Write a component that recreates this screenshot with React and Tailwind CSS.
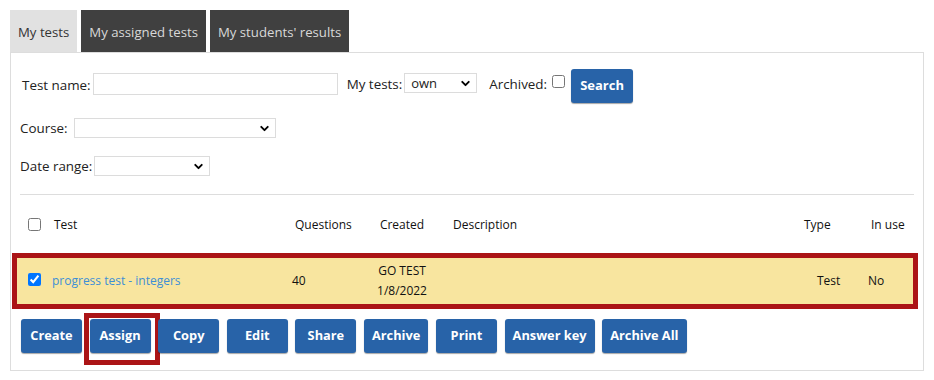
import React from "react";
import { ChevronDown } from "lucide-react";

const font = "font-['Open_Sans',sans-serif]";

function Select({ value, width }) {
  return (
    <div
      className={`relative flex h-[20px] items-center border border-[#dcdcdc] bg-white ${width}`}
    >
      <span className="pl-[6px] text-[13px] leading-none text-[#222]">{value}</span>
      <ChevronDown
        className="absolute right-[4px] top-[3px] h-[13px] w-[13px] text-black"
        strokeWidth={3.5}
      />
    </div>
  );
}

function Button({ children, outlined }) {
  return (
    <div className="relative">
      <button className="h-[34px] min-w-[61px] rounded-[3px] bg-[#2863a8] px-[8px] text-[12.8px] font-bold text-white shadow-[0_1px_1px_rgba(0,0,0,0.35)]">
        {children}
      </button>
      {outlined && (
        <span className="pointer-events-none absolute -left-[6px] -right-[9px] -top-[6px] -bottom-[12px] border-[5px] border-[#ab1416]" />
      )}
    </div>
  );
}

export default function App() {
  const buttons = ["Create", "Assign", "Copy", "Edit", "Share", "Archive", "Print", "Answer key", "Archive All"];

  return (
    <div className={`${font} min-h-[380px] w-[934px] bg-white pl-[10px] pt-[10px] text-[#222]`}>
      {/* Tabs */}
      <div className="flex gap-[4px] text-[13.2px]">
        <div className="flex h-[42px] items-center bg-[#e1e1e1] px-[8px] pt-[3px] text-[#333]">My tests</div>
        <div className="flex h-[42px] items-center bg-[#404040] px-[8px] pt-[3px] text-[#d8d8d8]">My assigned tests</div>
        <div className="flex h-[42px] items-center bg-[#404040] px-[8px] pt-[3px] text-[#d8d8d8]">My students' results</div>
      </div>

      {/* Panel */}
      <div className="w-[914px] border border-[#dddddd] px-[9px] pb-[17px] pt-[16px]">
        {/* Filters */}
        <div className="flex items-start text-[13.4px]">
          <span className="ml-[2px] mt-[5px] leading-[22px]">Test name:</span>
          <div className="ml-[2px] mt-[4px] h-[22px] w-[245px] border border-[#dcdcdc]" />
          <span className="ml-[9px] mt-[4px] leading-[22px]">My tests:</span>
          <div className="ml-[2px] mt-[4px]">
            <Select value="own" width="w-[73px]" />
          </div>
          <span className="ml-[12px] mt-[4px] leading-[22px]">Archived:</span>
          <input type="checkbox" className="ml-[5px] mt-[6px] h-[13px] w-[13px]" />
          <button className="ml-[6px] h-[34px] w-[62px] rounded-[3px] bg-[#2863a8] text-[13px] font-bold text-white shadow-[0_1px_1px_rgba(0,0,0,0.35)]">
            Search
          </button>
        </div>

        <div className="mt-[15px] flex items-center text-[13.4px]">
          <span className="mr-[6px] leading-[20px]">Course:</span>
          <Select value="" width="w-[202px]" />
        </div>

        <div className="mt-[18px] flex items-center text-[13.4px]">
          <span className="mr-[2px] leading-[20px]">Date range:</span>
          <Select value="" width="w-[116px]" />
        </div>

        <div className="mt-[18px] border-t border-[#dddddd]" />

        {/* Table header */}
        <div className="flex h-[58px] items-center pt-[2px] text-[12px] text-[#111]">
          <div className="w-[30px] pl-[8px]">
            <input type="checkbox" className="mt-[3px] h-[13px] w-[13px]" />
          </div>
          <div className="w-[238px] pl-[4px]">Test</div>
          <div className="w-[78px] pl-[7px]">Questions</div>
          <div className="w-[72px] text-center">Created</div>
          <div className="w-[352px] pl-[15px]">Description</div>
          <div className="w-[65px] pl-[14px]">Type</div>
          <div className="w-[56px] pl-[16px]">In use</div>
        </div>

        {/* Selected row */}
        <div className="-ml-[8px] -mr-[4px] flex items-center border-[5px] border-[#ab1416] bg-[#f8e59f] py-[3px] pl-[3px] text-[12px] text-[#111]">
          <div className="w-[30px] pl-[8px]">
            <input type="checkbox" defaultChecked className="mt-[1px] h-[13px] w-[13px]" />
          </div>
          <div className="w-[238px] pl-[2px] text-[#3d8fd6]">progress test - integers</div>
          <div className="w-[78px] pl-[4px]">40</div>
          <div className="w-[72px] text-center leading-[20px]">
            <div>GO TEST</div>
            <div>1/8/2022</div>
          </div>
          <div className="w-[352px]" />
          <div className="w-[65px] pl-[27px]">Test</div>
          <div className="w-[56px] pl-[13px]">No</div>
        </div>

        {/* Action buttons */}
        <div className="mt-[10px] flex gap-[7.6px] pl-[1px]">
          {buttons.map((b) => (
            <Button key={b} outlined={b === "Assign"}>
              {b}
            </Button>
          ))}
        </div>
      </div>
    </div>
  );
}
